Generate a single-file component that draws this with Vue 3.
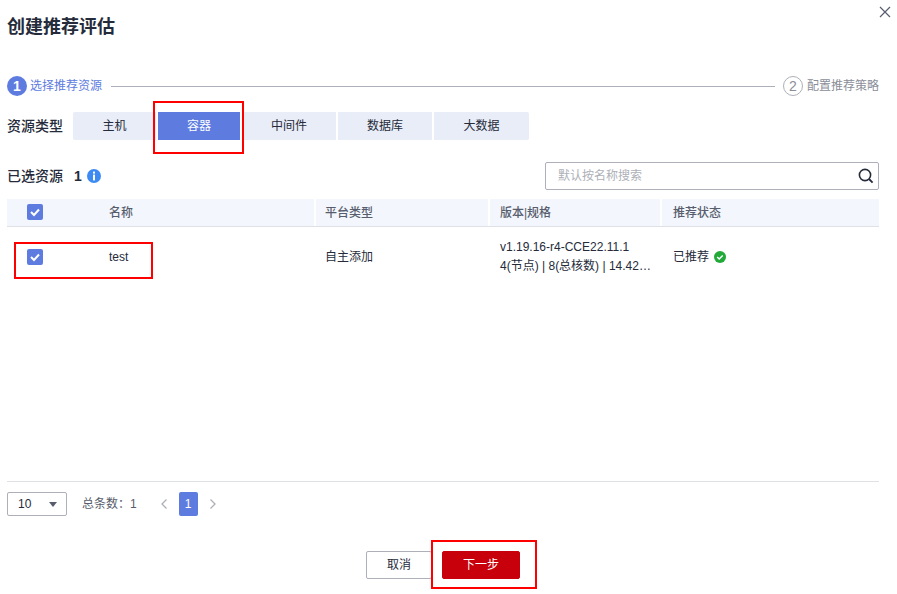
<script setup>
const tabs = [
  { label: '主机', w: 83 },
  { label: '容器', w: 82, active: true },
  { label: '中间件', w: 94 },
  { label: '数据库', w: 94 },
  { label: '大数据', w: 95 }
]
</script>

<template>
  <div class="dialog">
    <button class="close" aria-label="关闭">
      <svg width="12" height="12" viewBox="0 0 12 12"><path d="M1 1l10 10M11 1L1 11" stroke="#575d6c" stroke-width="1.2" fill="none"/></svg>
    </button>
    <h1 class="title">创建推荐评估</h1>

    <div class="steps">
      <span class="num active">1</span>
      <span class="step-label active-text">选择推荐资源</span>
      <span class="line"></span>
      <span class="num todo">2</span>
      <span class="step-label todo-text">配置推荐策略</span>
    </div>

    <div class="type-row">
      <span class="type-label">资源类型</span>
      <div class="tabs">
        <div v-for="t in tabs" :key="t.label" class="tab" :class="{ on: t.active }" :style="{ width: t.w + 'px' }">{{ t.label }}</div>
      </div>
      <span class="mark mark-tab"></span>
    </div>

    <div class="sel-row">
      <span class="sel-label">已选资源</span>
      <span class="sel-count">1</span>
      <svg class="info" width="14" height="14" viewBox="0 0 14 14">
        <circle cx="7" cy="7" r="7" fill="#3d8bf2"/>
        <rect x="6" y="2.600" width="2" height="2" fill="#fff"/>
        <rect x="6" y="5.600" width="2" height="5.800" fill="#fff"/>
      </svg>
      <div class="search">
        <span class="ph">默认按名称搜索</span>
        <svg width="16" height="16" viewBox="0 0 16 16"><circle cx="7" cy="7" r="5.600" stroke="#252b3a" stroke-width="1.600" fill="none"/><path d="M11 11l3.600 3.600" stroke="#252b3a" stroke-width="1.800" fill="none"/></svg>
      </div>
    </div>

    <div class="table">
      <div class="thead">
        <div class="c c0"><span class="check head-check"><svg width="16" height="16" viewBox="0 0 16 16"><path d="M4 8l3 3 5-5.500" stroke="#fff" stroke-width="2" fill="none"/></svg></span></div>
        <div class="c c1 sep">名称</div>
        <div class="c c2 sep">平台类型</div>
        <div class="c c3 sep">版本|规格</div>
        <div class="c c4">推荐状态</div>
      </div>
      <div class="tr">
        <div class="c c0"><span class="check"><svg width="16" height="16" viewBox="0 0 16 16"><path d="M4 8l3 3 5-5.500" stroke="#fff" stroke-width="2" fill="none"/></svg></span></div>
        <div class="c c1">test</div>
        <div class="c c2">自主添加</div>
        <div class="c c3 multi">
          <div>v1.19.16-r4-CCE22.11.1</div>
          <div>4(节点) | 8(总核数) | 14.42…</div>
        </div>
        <div class="c c4">已推荐<svg class="ok" width="12" height="12" viewBox="0 0 12 12"><circle cx="6" cy="6" r="6" fill="#22a93a"/><path d="M3.200 6l2 2 3.500-3.600" stroke="#fff" stroke-width="1.500" fill="none"/></svg></div>
      </div>
      <span class="mark mark-row"></span>
    </div>

    <div class="pager">
      <div class="size">10<span class="tri"></span></div>
      <span class="total">总条数：1</span>
      <svg class="chev prev" width="8" height="12" viewBox="0 0 8 12"><path d="M6.500 1.500L2 6l4.500 4.500" stroke="#adb0b8" stroke-width="1.300" fill="none"/></svg>
      <span class="page">1</span>
      <svg class="chev next" width="8" height="12" viewBox="0 0 8 12"><path d="M1.500 1.500L6 6l-4.500 4.500" stroke="#adb0b8" stroke-width="1.300" fill="none"/></svg>
    </div>

    <div class="actions">
      <button class="btn cancel">取消</button>
      <button class="btn next-btn">下一步<span class="mark mark-btn"></span></button>
    </div>
  </div>
</template>

<style>
html, body { margin: 0; background: #fff; }
</style>

<style scoped>
.dialog {
  position: relative;
  width: 897px;
  height: 594px;
  box-sizing: border-box;
  padding: 0 18px 0 7px;
  overflow: hidden;
  background: #fff;
  color: #252b3a;
  font: 12px/18px "Liberation Sans", "Noto Sans CJK SC", sans-serif;
}
.close { position: absolute; top: 6px; right: 6px; width: 12px; height: 12px; padding: 0; border: 0; background: none; display: flex; }
.title { margin: 0; padding-top: 15px; font-size: 18px; line-height: 25px; font-weight: 700; color: #252b3a; }
.steps { display: flex; align-items: center; margin-top: 36px; height: 20px; }
.num { width: 20px; height: 20px; box-sizing: border-box; border-radius: 50%; display: flex; align-items: center; justify-content: center; font-size: 14px; flex: none; }
.num.active { background: #5e7ce0; color: #fff; font-weight: 700; }
.num.todo { border: 1px solid #adb0b8; color: #8a8e99; }
.step-label { margin-left: 3px; flex: none; }
.active-text { color: #5e7ce0; }
.todo-text { color: #8a8e99; margin-left: 4px; }
.line { flex: 1; height: 1px; background: #adb0b8; margin: 0 8px 0 9px; }
.type-row { position: relative; display: flex; align-items: center; margin-top: 16px; height: 28px; }
.type-label { width: 66px; font-size: 14px; font-weight: 500; flex: none; }
.tabs { display: flex; gap: 2px; }
.tab { height: 28px; line-height: 28px; text-align: center; background: #e9edf7; color: #252b3a; }
.tab:first-child { border-radius: 2px 0 0 2px; }
.tab:last-child { border-radius: 0 2px 2px 0; }
.tab.on { background: #5e7ce0; color: #fff; }
.mark { position: absolute; box-sizing: border-box; border: 2px solid #f00; pointer-events: none; }
.mark-tab { left: 146px; top: -11px; width: 91px; height: 53px; }
.sel-row { position: relative; display: flex; align-items: center; margin-top: 22px; height: 28px; }
.sel-label { font-size: 14px; font-weight: 500; }
.sel-count { margin-left: 11px; font-size: 14px; font-weight: 700; }
.info { margin-left: 5px; }
.search { margin-left: auto; width: 334px; height: 28px; box-sizing: border-box; border: 1px solid #adb0b8; border-radius: 2px; display: flex; align-items: center; justify-content: space-between; padding: 0 4px 0 12px; }
.ph { color: #adb0b8; }
.table { position: relative; margin-top: 9px; }
.thead { display: flex; height: 28px; background: #f3f6fc; border-bottom: 1px solid #dfe1e6; box-sizing: border-box; color: #575d6c; font-weight: 500; }
.tr { display: flex; height: 60px; align-items: center; }
.c { box-sizing: border-box; display: flex; align-items: center; height: 100%; }
.c0 { width: 92px; padding-left: 20px; flex: none; }
.c1 { width: 217px; padding-left: 10px; flex: none; }
.c2 { width: 174px; padding-left: 9px; flex: none; }
.c3 { width: 172px; padding-left: 10px; flex: none; }
.c4 { flex: 1; padding-left: 11px; }
.sep { border-right: 2px solid #fff; }
.multi { flex-direction: column; align-items: flex-start; justify-content: center; line-height: 19px; white-space: nowrap; }
.check { width: 16px; height: 16px; border-radius: 2px; background: #5e7ce0; display: block; }
.head-check { margin-top: -1px; }
.check svg { display: block; }
.ok { margin-left: 5px; }
.mark-row { left: 7px; top: 43px; width: 139px; height: 37px; }
.pager { display: flex; align-items: center; margin-top: 194px; border-top: 1px solid #dfe1e6; padding-top: 10px; height: 24px; }
.size { width: 60px; height: 24px; box-sizing: border-box; border: 1px solid #adb0b8; border-radius: 2px; padding-left: 10px; line-height: 22px; position: relative; }
.tri { position: absolute; right: 9px; top: 9px; border: 4px solid transparent; border-top: 5px solid #575d6c; border-bottom: 0; }
.total { margin-left: 15px; color: #575d6c; }
.chev.prev { margin-left: 23px; }
.page { margin-left: 11px; width: 19px; height: 24px; border-radius: 2px; background: #5e7ce0; color: #fff; text-align: center; line-height: 24px; }
.chev.next { margin-left: 11px; }
.actions { display: flex; justify-content: flex-start; gap: 10px; margin-top: 35px; padding-left: 359px; }
.btn { height: 28px; box-sizing: border-box; border-radius: 2px; font: inherit; padding: 0; position: relative; }
.cancel { width: 66px; background: #fff; border: 1px solid #adb0b8; color: #252b3a; }
.next-btn { width: 78px; background: #c7000b; border: 1px solid #c7000b; color: #fff; }
.mark-btn { left: -12px; top: -12px; width: 106px; height: 49px; }
</style>
